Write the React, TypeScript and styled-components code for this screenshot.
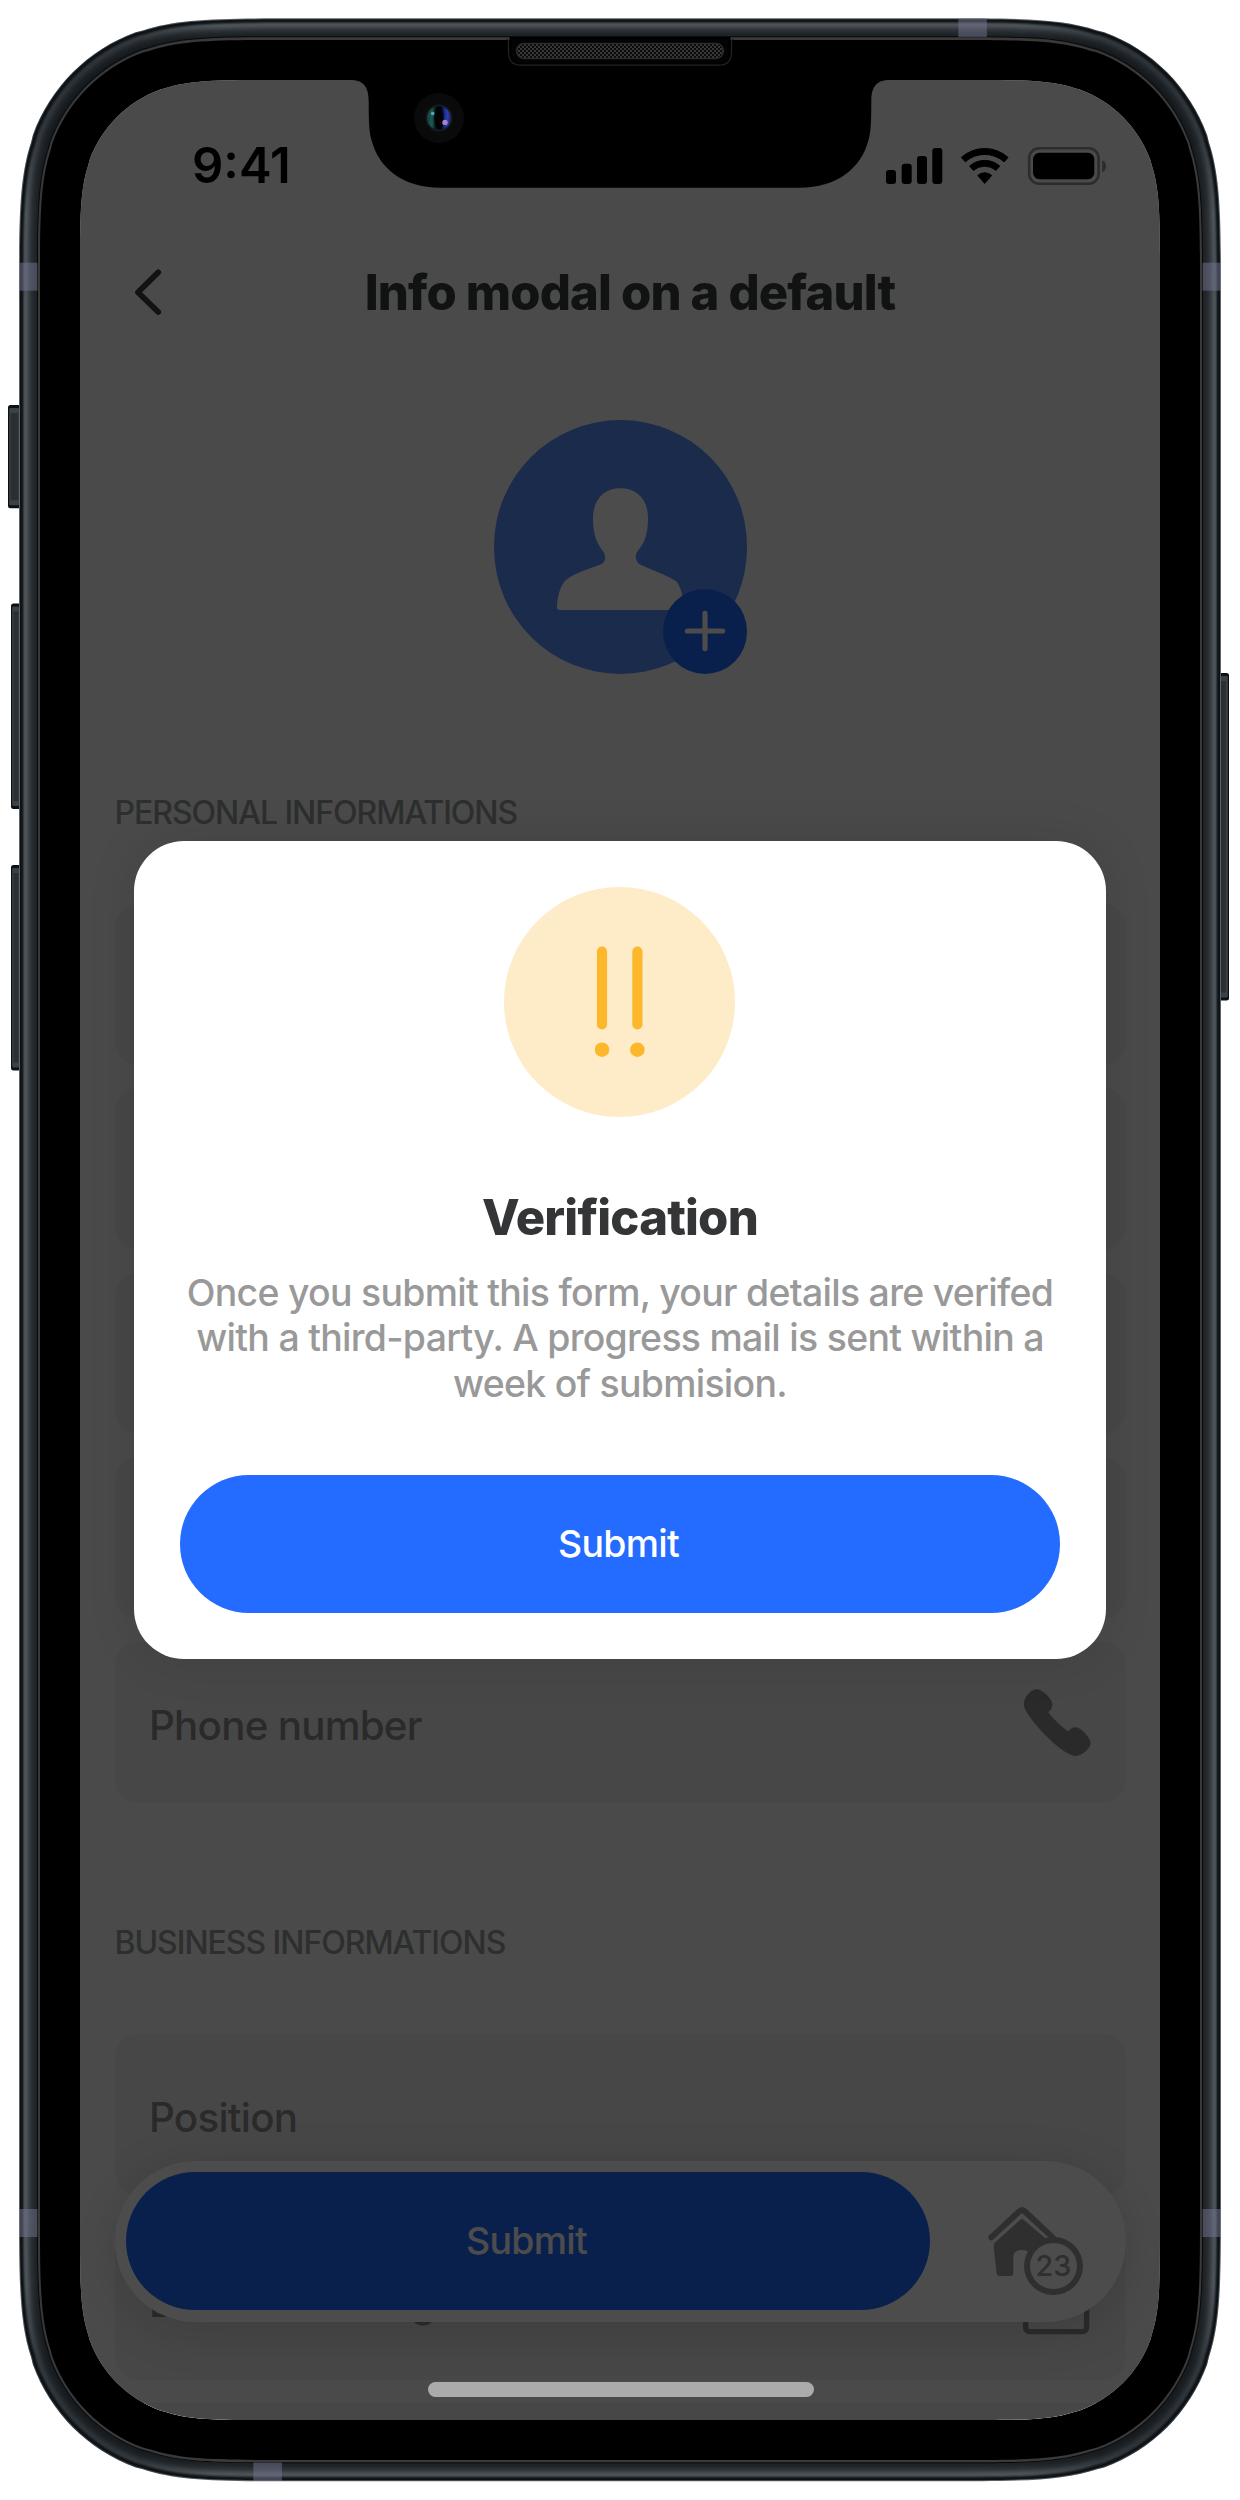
import React from "react";
import styled, { createGlobalStyle } from "styled-components";

/* ---------- geometry ---------- */

// Rounded rectangle with continuous (squircle) corners.
function squircle(x: number, y: number, w: number, h: number, r: number): string {
  const X = (a: number) => (x + a).toFixed(2);
  const Y = (a: number) => (y + a).toFixed(2);
  const a = 1.52866483 * r;
  const b = 1.08849296 * r;
  const c = 0.86840694 * r;
  const m = 0.66993427 * r;
  const n = 0.065496 * r;
  const d = 0.63149379 * r;
  const e = 0.37282383 * r;
  const f = 0.16905956 * r;
  const g = 0.07491139 * r;
  return [
    `M${X(a)} ${Y(0)}L${X(w - a)} ${Y(0)}`,
    `C${X(w - b)} ${Y(0)} ${X(w - c)} ${Y(0)} ${X(w - m)} ${Y(n)}L${X(w - d)} ${Y(g)}`,
    `C${X(w - e)} ${Y(f)} ${X(w - f)} ${Y(e)} ${X(w - g)} ${Y(d)}L${X(w - n)} ${Y(m)}`,
    `C${X(w)} ${Y(c)} ${X(w)} ${Y(b)} ${X(w)} ${Y(a)}`,
    `L${X(w)} ${Y(h - a)}`,
    `C${X(w)} ${Y(h - b)} ${X(w)} ${Y(h - c)} ${X(w - n)} ${Y(h - m)}L${X(w - g)} ${Y(h - d)}`,
    `C${X(w - f)} ${Y(h - e)} ${X(w - e)} ${Y(h - f)} ${X(w - d)} ${Y(h - g)}L${X(w - m)} ${Y(h - n)}`,
    `C${X(w - c)} ${Y(h)} ${X(w - b)} ${Y(h)} ${X(w - a)} ${Y(h)}`,
    `L${X(a)} ${Y(h)}`,
    `C${X(b)} ${Y(h)} ${X(c)} ${Y(h)} ${X(m)} ${Y(h - n)}L${X(d)} ${Y(h - g)}`,
    `C${X(e)} ${Y(h - f)} ${X(f)} ${Y(h - e)} ${X(g)} ${Y(h - d)}L${X(n)} ${Y(h - m)}`,
    `C${X(0)} ${Y(h - c)} ${X(0)} ${Y(h - b)} ${X(0)} ${Y(h - a)}`,
    `L${X(0)} ${Y(a)}`,
    `C${X(0)} ${Y(b)} ${X(0)} ${Y(c)} ${X(n)} ${Y(m)}L${X(g)} ${Y(d)}`,
    `C${X(f)} ${Y(e)} ${X(e)} ${Y(f)} ${X(d)} ${Y(g)}L${X(m)} ${Y(n)}`,
    `C${X(c)} ${Y(0)} ${X(b)} ${Y(0)} ${X(a)} ${Y(0)}Z`,
  ].join("");
}

const SCREEN_PATH = squircle(0, 0, 1080, 2340, 127);

/* ---------- styles ---------- */

const GlobalStyle = createGlobalStyle`
  body {
    margin: 0;
    background: #fff;
    font-family: Inter, "Liberation Sans", sans-serif;
  }
`;

const Device = styled.div`
  position: relative;
  box-sizing: border-box;
  width: 1240px;
  height: 2500px;
  padding: 80px;
`;

const Shell = styled.svg`
  position: absolute;
  inset: 0;
`;

const Screen = styled.main`
  position: relative;
  width: 1080px;
  height: 2340px;
  overflow: hidden;
  background: #f8f8f8;
  clip-path: path("${SCREEN_PATH}");
`;

const Content = styled.div`
  display: flex;
  flex-direction: column;
  padding: 152px 34.5px 0;
`;

const Header = styled.header`
  display: flex;
  align-items: center;
  height: 120px;
  padding-right: 24px;
`;

const BackButton = styled.button`
  display: flex;
  width: 46px;
  height: 56px;
  padding: 0;
  border: 0;
  background: none;

  svg {
    flex: none;
  }
`;

const Title = styled.h1`
  flex: 1;
  margin: 0;
  padding: 2px 2px 0 0;
  font-size: 48.96px;
  line-height: 60px;
  font-weight: 800;
  letter-spacing: -0.84px;
  text-align: center;
  color: #39423f;
`;

const Avatar = styled.div`
  display: flex;
  align-items: flex-end;
  justify-content: flex-end;
  align-self: center;
  position: relative;
  width: 253.4px;
  height: 253.4px;
  margin: 68.3px 0 0 1.4px;
  border-radius: 50%;
  background: #5d8ffa;
`;

const Person = styled.svg`
  position: absolute;
  left: 63.2px;
  top: 68px;
`;

const AddBadge = styled.div`
  display: flex;
  align-items: center;
  justify-content: center;
  position: relative;
  width: 84.5px;
  height: 84.5px;
  border-radius: 50%;
  background: #246bff;
`;

const SectionLabel = styled.h2<{ $top: number }>`
  margin: ${(p) => p.$top}px 0 70.9px;
  font-size: 32px;
  line-height: 40px;
  font-weight: 500;
  letter-spacing: -1.04px;
  white-space: nowrap;
  color: #979d9a;
`;

const Fields = styled.div`
  display: flex;
  flex-direction: column;
  gap: 23.2px;
`;

const FieldBox = styled.div`
  display: flex;
  align-items: center;
  justify-content: space-between;
  box-sizing: border-box;
  height: 161.3px;
  padding: 8px 32.5px 0 34.5px;
  border-radius: 23px;
  background: #ededed;
  font-size: 40.32px;
  line-height: 50px;
  font-weight: 500;
  letter-spacing: -0.75px;
  color: #8e8e8e;
`;

const FieldIcon = styled.svg`
  margin-top: -7px;
`;

const ActionBar = styled.div`
  position: absolute;
  left: 34.5px;
  right: 34.5px;
  top: 2080.7px;
  display: flex;
  align-items: center;
  box-sizing: border-box;
  height: 161.3px;
  padding: 11.5px;
  border-radius: 81px;
  background: #fff;
  box-shadow: 0 8px 50px rgba(0, 0, 0, 0.14);
`;

const PillButton = styled.button<{ $width: number }>`
  width: ${(p) => p.$width}px;
  height: 138.2px;
  padding: 0 3px 0 0;
  border: 0;
  border-radius: 70px;
  background: #246bff;
  color: #fff;
  font-family: inherit;
  font-size: 37.44px;
  line-height: 46px;
  font-weight: 500;
  letter-spacing: -0.7px;
`;

const HomeButton = styled.div`
  position: relative;
  width: 96px;
  height: 89px;
  margin-left: 57px;
  margin-top: 17px;
`;

const CountBadge = styled.span`
  position: absolute;
  left: 36.8px;
  top: 31.5px;
  display: flex;
  align-items: center;
  justify-content: center;
  box-sizing: border-box;
  width: 59px;
  height: 58.5px;
  border: 6px solid #999f9c;
  border-radius: 50%;
  background: #fff;
  color: #999f9c;
  font-size: 28.8px;
  line-height: 30px;
  font-weight: 500;
`;

const Overlay = styled.div`
  position: absolute;
  inset: 0;
  display: flex;
  align-items: center;
  justify-content: center;
  background: rgba(0, 0, 0, 0.7);
`;

const Modal = styled.section`
  display: flex;
  flex-direction: column;
  align-items: center;
  box-sizing: border-box;
  width: 972px;
  height: 818.4px;
  padding: 46px;
  border-radius: 50px;
  background: #fff;
  box-shadow: 0 0 50px rgba(0, 0, 0, 0.1);
`;

const AlertCircle = styled.div`
  display: flex;
  align-items: center;
  justify-content: center;
  flex: none;
  width: 230.4px;
  height: 230.4px;
  margin-right: 0.8px;
  border-radius: 50%;
  background: #feecc9;
`;

const ModalTitle = styled.h2`
  margin: 71px 0 21.4px;
  font-size: 48.96px;
  line-height: 60px;
  font-weight: 800;
  letter-spacing: -0.79px;
  color: #343537;
`;

const ModalText = styled.p`
  width: 880px;
  margin: 0 0 68.6px;
  font-size: 37.44px;
  line-height: 45.6px;
  font-weight: 500;
  letter-spacing: -0.71px;
  text-align: center;
  color: #999;
`;

const StatusBar = styled.div`
  position: absolute;
  left: 0;
  right: 0;
  top: 55px;
  display: flex;
  align-items: center;
  justify-content: space-between;
  height: 61px;
  padding: 0 53px 0 112px;
  color: #000;
`;

const Clock = styled.time`
  font-size: 48.96px;
  line-height: 60px;
  font-weight: 600;
`;

const HomeIndicator = styled.div`
  position: absolute;
  left: 347.5px;
  top: 2302.3px;
  width: 386px;
  height: 14.6px;
  border-radius: 8px;
  background: #ababab;
`;

/* ---------- phone shell ---------- */

// Metal band shading, one colour per pixel from the outside in.
const BAND = [
  "#5d6266", "#0c1317", "#0e1519", "#192025", "#33383d", "#484d52", "#4f5459",
  "#4b5055", "#454a4f", "#3e4348", "#363b40", "#30353a", "#2b3035", "#272c31",
  "#24292d", "#212629", "#1f2427", "#1e2225", "#060708", "#3b3b3a", "#353433",
];

const ANTENNAS = [
  [19, 262.7, 18.5, 28], [1202.5, 262.7, 18.5, 28],
  [19, 2209, 18.5, 28], [1202.5, 2209, 18.5, 28],
  [958.3, 18.5, 28.6, 18.5], [253.3, 2462.5, 28.6, 18.5],
];

function SideButton({ y, h, side, depth }: { y: number; h: number; side: "left" | "right"; depth: number }) {
  const left = side === "left";
  const x = left ? 19 - depth : 1221;
  return (
    <g>
      <rect x={left ? x : x - 4} y={y} width={depth + 4} height={h} rx={2.5} fill="#0b1014" />
      <rect x={left ? x + 1.2 : x} y={y + 3} width={depth - 1.2} height={h - 6} rx={1} fill="#3b4144" />
      <rect x={left ? x + 2.6 : x} y={y + 8} width={depth - 3.2} height={h - 16} fill="#2a2f33" />
    </g>
  );
}

function PhoneShell() {
  return (
    <Shell width="1240" height="2500" viewBox="0 0 1240 2500" fill="none">
      <defs>
        <radialGradient id="cornerShade">
          <stop offset="0" stopColor="#0c1116" stopOpacity="0.5" />
          <stop offset="0.5" stopColor="#0c1116" stopOpacity="0.4" />
          <stop offset="1" stopColor="#0c1116" stopOpacity="0" />
        </radialGradient>
        <clipPath id="bandClip">
          <path d={squircle(19, 18.3, 1202, 2463, 185)} />
        </clipPath>
      </defs>
      <SideButton y={405} h={103.3} side="left" depth={11} />
      <SideButton y={603.5} h={205.5} side="left" depth={8} />
      <SideButton y={865} h={205.5} side="left" depth={8} />
      <SideButton y={673} h={327.5} side="right" depth={8} />
      {BAND.map((color, i) => (
        <path key={i} d={squircle(19 + i, 18.3 + i, 1202 - 2 * i, 2463 - 2 * i, 185 - i)} fill={color} />
      ))}
      <g clipPath="url(#bandClip)">
        {[[74, 73], [1166, 73], [74, 2427], [1166, 2427]].map(([cx, cy]) => (
          <circle key={`${cx}-${cy}`} cx={cx} cy={cy} r={150} fill="url(#cornerShade)" />
        ))}
      </g>
      {ANTENNAS.map(([x, y, width, height]) => (
        <rect key={`${x}-${y}`} x={x} y={y} width={width} height={height} fill="#747690" fillOpacity={0.5} />
      ))}
      <path d={squircle(38.4, 38, 1163.2, 2424, 165.5)} fill="#3b3a39" />
      <path d={squircle(40, 40, 1160, 2420, 164)} fill="#000" />
    </Shell>
  );
}

function Notch() {
  return (
    <Shell width="1240" height="2500" viewBox="0 0 1240 2500" fill="none">
      <defs>
        <pattern id="mesh" width="4" height="4" patternUnits="userSpaceOnUse">
          <rect width="4" height="4" fill="#0b0b0b" />
          <rect width="2" height="2" fill="#373737" />
          <rect x="2" y="2" width="2" height="2" fill="#373737" />
        </pattern>
        <linearGradient id="lens" x1="0" x2="1">
          <stop offset="0" stopColor="#173f3b" />
          <stop offset="0.2" stopColor="#1c5a50" />
          <stop offset="0.36" stopColor="#05100f" />
          <stop offset="0.58" stopColor="#03030c" />
          <stop offset="0.7" stopColor="#10247a" />
          <stop offset="0.85" stopColor="#2b3fb0" />
          <stop offset="1" stopColor="#2a235c" />
        </linearGradient>
      </defs>
      <path
        d="M348 76V80H350C364 80 368.5 87 368.7 101C368.7 120 369 132 371.5 140C379 169 404 187.7 440 187.7H800C836 187.7 861 169 868.5 140C871 132 871.3 120 871.3 101C871.5 87 876 80 890 80H892V76Z"
        fill="#000"
      />
      <rect x="509.5" y="37" width="221" height="4" fill="#000" />
      <path d="M506 39Q508.5 39 508.5 42V52Q508.5 65.2 521 65.2H719Q731.5 65.2 731.5 52V42Q731.5 39 734 39" stroke="#242424" strokeWidth="1.2" />
      <path d="M511.5 39V52Q511.5 63 521 63H719Q728.5 63 728.5 52V39Z" fill="#030303" />
      <rect x="516.5" y="43.5" width="207" height="15" rx="7.5" fill="url(#mesh)" stroke="#2b2b2b" strokeWidth="1.4" />
      <circle cx="439" cy="118" r="25" fill="#0a0a0a" />
      <circle cx="439" cy="118" r="13.4" fill="#161a22" />
      <circle cx="439" cy="118" r="11.8" fill="url(#lens)" />
      <ellipse cx="439" cy="118" rx="4.6" ry="11.2" fill="#020204" />
      <circle cx="432.7" cy="113.6" r="1.8" fill="#4fa6c4" />
      <circle cx="445" cy="122.4" r="2.7" fill="#a884c6" />
    </Shell>
  );
}

/* ---------- icons ---------- */

function ring(cx: number, cy: number, outer: number, inner: number, deg: number): string {
  const s = Math.sin((deg * Math.PI) / 180);
  const c = Math.cos((deg * Math.PI) / 180);
  const p = (r: number, k: number) => `${(cx + k * r * s).toFixed(2)} ${(cy - r * c).toFixed(2)}`;
  return inner > 0
    ? `M${p(outer, -1)}A${outer} ${outer} 0 0 1 ${p(outer, 1)}L${p(inner, 1)}A${inner} ${inner} 0 0 0 ${p(inner, -1)}Z`
    : `M${p(outer, -1)}A${outer} ${outer} 0 0 1 ${p(outer, 1)}L${cx} ${cy}Z`;
}

const StatusIcons = () => (
  <svg width="221" height="40" viewBox="886 145 221 40">
    <rect x="886" y="169" width="10" height="14" rx="3" />
    <rect x="901.7" y="162.7" width="10" height="20.3" rx="3" />
    <rect x="917" y="155" width="10" height="28" rx="3" />
    <rect x="932.3" y="147" width="10" height="36" rx="3" />
    <g stroke="#000" strokeWidth="1" strokeLinejoin="round">
      <path d={ring(984.7, 182.4, 34.9, 29, 42)} />
      <path d={ring(984.7, 182.4, 23, 17.2, 41)} />
      <path d={ring(984.7, 182.4, 10.6, 0, 41)} />
    </g>
    <rect x="1029.2" y="147.2" width="69.4" height="35.6" rx="10" fill="none" stroke="#000" strokeOpacity="0.4" strokeWidth="2.6" />
    <rect x="1033" y="151.8" width="61.3" height="26.4" rx="6.5" />
    <path d="M1102.2 159.2C1107.4 161.5 1107.4 169 1102.2 171.3Z" fillOpacity="0.4" />
  </svg>
);

const PersonIcon = () => (
  <Person width="126.7" height="122.7" viewBox="351 294 380 368" fill="#fff">
    <path d="M351 652C351 620 361 590 375 573C395 553 430 542 478 525C497 519 499 502 491 487C480 470 459 450 459 385C459 325 495 295 541 295C588 295 624 325 624 385C624 450 603 470 592 485C584 497 585 516 603 525C650 545 690 560 710 575C720 588 731 616 731 652Q731 660 723 660H360Q351 660 351 652Z" />
  </Person>
);

const PhoneIcon = () => (
  <FieldIcon width="72.4" height="71.6" viewBox="930 260 210 215" preserveAspectRatio="none" fill="#8e8e8e">
    <path d="M938 312C938 290 960 267 976 267C992 267 1021 296 1021 313C1021 326 1009 336 1009 336C1025 357 1045 378 1067 394C1072 386 1080 381 1088 381C1104 381 1132 412 1132 429C1132 446 1104 467 1089 467C1068 467 1030 435 1010 414C985 389 938 335 938 312Z" />
  </FieldIcon>
);

const CalendarIcon = () => (
  <FieldIcon width="72" height="72" viewBox="0 0 72 72" fill="none" stroke="#8e8e8e" strokeWidth="5.4">
    <rect x="4.6" y="10" width="61" height="58.6" rx="4" />
    <path d="M4.6 26H65.6M20 2V14M50 2V14" />
  </FieldIcon>
);

const HouseIcon = () => (
  <svg width="98.3" height="91.7" viewBox="740 555 295 275" fill="#999f9c">
    <path d="M753 652L838 573Q845 567 852 573L937 652" fill="none" stroke="#999f9c" strokeWidth="18" strokeLinecap="round" strokeLinejoin="round" />
    <path d="M840 599Q845 595 850 599L926 664Q932 670 931 682L922 760Q921 768 913 768H879Q871 768 871 760V712Q871 690 845 690Q819 690 819 712V760Q819 768 811 768H778Q770 768 769 760L760 682Q759 672 765 667Z" />
  </svg>
);

/* ---------- page ---------- */

function Field({ label, icon }: { label?: string; icon?: React.ReactNode }) {
  return (
    <FieldBox>
      {label && <span>{label}</span>}
      {icon}
    </FieldBox>
  );
}

export default function App() {
  return (
    <>
      <GlobalStyle />
      <Device>
        <PhoneShell />
        <Screen>
          <Content>
            <Header>
              <BackButton aria-label="Back">
                <svg width="56" height="56" viewBox="0 0 56 56" fill="none" stroke="#39423f" strokeWidth="5.8" strokeLinecap="round" strokeLinejoin="round">
                  <path d="M43.2 8.4L23 28.2L43.2 48" />
                </svg>
              </BackButton>
              <Title>Info modal on a default</Title>
            </Header>
            <Avatar>
              <PersonIcon />
              <AddBadge>
                <svg width="42" height="42" viewBox="0 0 42 42" stroke="#fff" strokeWidth="5.2" strokeLinecap="round">
                  <path d="M21 3.4V38.6M3.4 21H38.6" />
                </svg>
              </AddBadge>
            </Avatar>
            <SectionLabel $top={119.2}>PERSONAL INFORMATIONS</SectionLabel>
            <Fields>
              <Field />
              <Field />
              <Field />
              <Field />
              <Field label="Phone number" icon={<PhoneIcon />} />
            </Fields>
            <SectionLabel $top={119.9}>BUSINESS INFORMATIONS</SectionLabel>
            <Fields>
              <Field label="Position" />
              <Field label="Date of starting" icon={<CalendarIcon />} />
              <Field />
            </Fields>
          </Content>
          <ActionBar>
            <PillButton $width={804}>Submit</PillButton>
            <HomeButton>
              <HouseIcon />
              <CountBadge>23</CountBadge>
            </HomeButton>
          </ActionBar>
          <Overlay>
            <Modal>
              <AlertCircle>
                <svg width="50" height="112" viewBox="0 0 50 112" fill="#fdb72b">
                  <rect x="1.9" y="0.6" width="10.2" height="83" rx="5.1" />
                  <rect x="37.3" y="0.6" width="10.2" height="83" rx="5.1" />
                  <circle cx="7" cy="103.7" r="7.3" />
                  <circle cx="42.4" cy="103.7" r="7.3" />
                </svg>
              </AlertCircle>
              <ModalTitle>Verification</ModalTitle>
              <ModalText>
                Once you submit this form, your details are verifed with a third-party. A progress mail is sent within a week of submision.
              </ModalText>
              <PillButton $width={880}>Submit</PillButton>
            </Modal>
          </Overlay>
          <StatusBar>
            <Clock>9:41</Clock>
            <StatusIcons />
          </StatusBar>
          <HomeIndicator />
        </Screen>
        <Notch />
      </Device>
    </>
  );
}
